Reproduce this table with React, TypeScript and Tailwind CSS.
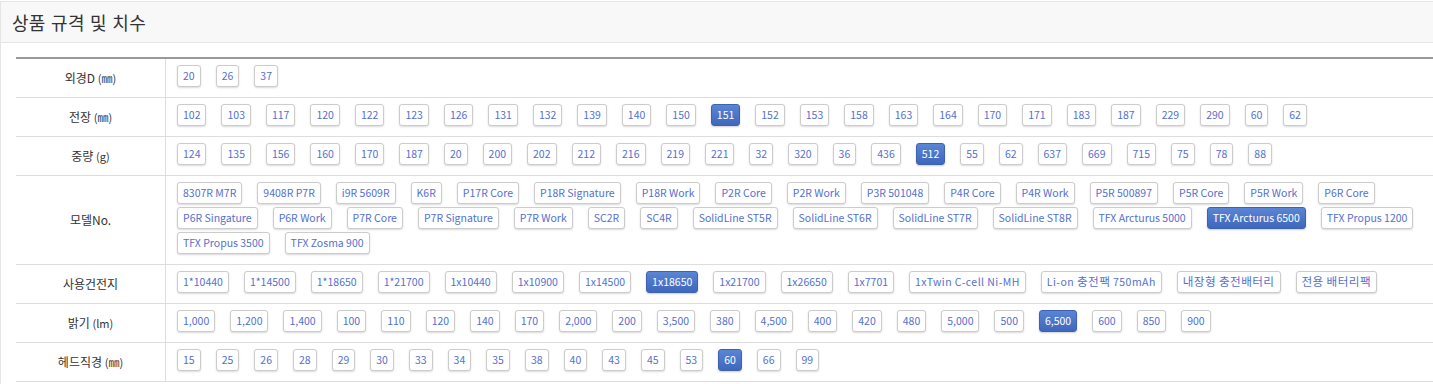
import React from "react";

type Row = { label: React.ReactNode; lines: string[][]; sel: string };

const FONT = { fontFamily: '"Noto Sans CJK KR", "Noto Sans", sans-serif' };

const WIDE = new Set(["1xTwin C-cell Ni-MH", "Li-on 충전팩 750mAh", "내장형 충전배터리", "전용 배터리팩"]);

const rows: Row[] = [
  {
    label: (
      <>
        외경D <span className="text-[11px]">(㎜)</span>
      </>
    ),
    lines: [["20", "26", "37"]],
    sel: "",
  },
  {
    label: (
      <>
        전장 <span className="text-[11px]">(㎜)</span>
      </>
    ),
    lines: [
      "102 103 117 120 122 123 126 131 132 139 140 150 151 152 153 158 163 164 170 171 183 187 229 290 60 62".split(" "),
    ],
    sel: "151",
  },
  {
    label: (
      <>
        중량 <span className="text-[11px]">(g)</span>
      </>
    ),
    lines: [
      "124 135 156 160 170 187 20 200 202 212 216 219 221 32 320 36 436 512 55 62 637 669 715 75 78 88".split(" "),
    ],
    sel: "512",
  },
  {
    label: <>모델No.</>,
    lines: [
      [
        "8307R M7R",
        "9408R P7R",
        "i9R 5609R",
        "K6R",
        "P17R Core",
        "P18R Signature",
        "P18R Work",
        "P2R Core",
        "P2R Work",
        "P3R 501048",
        "P4R Core",
        "P4R Work",
        "P5R 500897",
        "P5R Core",
        "P5R Work",
        "P6R Core",
      ],
      [
        "P6R Singature",
        "P6R Work",
        "P7R Core",
        "P7R Signature",
        "P7R Work",
        "SC2R",
        "SC4R",
        "SolidLine ST5R",
        "SolidLine ST6R",
        "SolidLine ST7R",
        "SolidLine ST8R",
        "TFX Arcturus 5000",
        "TFX Arcturus 6500",
        "TFX Propus 1200",
      ],
      ["TFX Propus 3500", "TFX Zosma 900"],
    ],
    sel: "TFX Arcturus 6500",
  },
  {
    label: <>사용건전지</>,
    lines: [
      [
        "1*10440",
        "1*14500",
        "1*18650",
        "1*21700",
        "1x10440",
        "1x10900",
        "1x14500",
        "1x18650",
        "1x21700",
        "1x26650",
        "1x7701",
        "1xTwin C-cell Ni-MH",
        "Li-on 충전팩 750mAh",
        "내장형 충전배터리",
        "전용 배터리팩",
      ],
    ],
    sel: "1x18650",
  },
  {
    label: (
      <>
        밝기 <span className="text-[11px]">(lm)</span>
      </>
    ),
    lines: [
      "1,000 1,200 1,400 100 110 120 140 170 2,000 200 3,500 380 4,500 400 420 480 5,000 500 6,500 600 850 900".split(" "),
    ],
    sel: "6,500",
  },
  {
    label: (
      <>
        헤드직경 <span className="text-[11px]">(㎜)</span>
      </>
    ),
    lines: ["15 25 26 28 29 30 33 34 35 38 40 43 45 53 60 66 99".split(" ")],
    sel: "60",
  },
];

function ChipText({ text }: { text: string }) {
  const parts = text.split(/([\uAC00-\uD7A3]+)/).filter((p) => p.length > 0);
  return (
    <>
      {parts.map((p, i) =>
        /[\uAC00-\uD7A3]/.test(p) ? (
          <span key={i} className="text-[11.6px]">
            {p}
          </span>
        ) : (
          <span key={i} className="whitespace-pre">
            {p.replace(/ /g, "\u00a0")}
          </span>
        )
      )}
    </>
  );
}

function Chip({ text, active }: { text: string; active: boolean }) {
  const wide = WIDE.has(text);
  if (active) {
    return (
      <span className="inline-flex h-[22px] items-center whitespace-nowrap rounded-[3px] border border-[#3d62b0] bg-gradient-to-b from-[#5a84d4] to-[#3f68bd] px-[5px] text-[10.5px] text-white shadow-[0_1px_2px_rgba(0,0,0,0.2)]">
        <ChipText text={text} />
      </span>
    );
  }
  return wide ? (
    <span className="inline-flex h-[22px] items-center whitespace-nowrap rounded-[3px] border border-[#cccccc] bg-white px-[5px] text-[10.5px] tracking-[0.45px] text-[#5470d0] shadow-[0_1px_2px_rgba(0,0,0,0.15)]">
      <ChipText text={text} />
    </span>
  ) : (
    <span className="inline-flex h-[22px] items-center whitespace-nowrap rounded-[3px] border border-[#cccccc] bg-white px-[5px] text-[10.5px] text-[#5470d0] shadow-[0_1px_2px_rgba(0,0,0,0.15)]">
      <ChipText text={text} />
    </span>
  );
}

export default function App() {
  return (
    <div className="w-[1433px] h-[384px] overflow-hidden bg-white" style={FONT}>
      <div className="mt-[1px] border-l border-t border-[#e5e5e5] h-[383px]">
        <div className="flex h-[41px] items-center border-b border-[#e5e5e5] bg-[#f8f8f8] pl-[11px] text-[18px] tracking-[0.3px] [word-spacing:1px] text-[#333]">
          상품 규격 및 치수
        </div>
        <div className="ml-[15px] mt-[14px] border-t-2 border-[#999999]">
          {rows.map((r, i) => (
            <div key={i} className="flex border-b border-[#dddddd]">
              <div className="flex w-[150px] shrink-0 items-center justify-center border-r border-[#dddddd] text-[12px] text-[#333]">
                <span>{r.label}</span>
              </div>
              <div className="flex flex-col gap-[3px] pl-[11px] pt-[6px] pb-[10px]">
                {r.lines.map((line, j) => (
                  <div key={j} className="flex flex-nowrap gap-x-[15px]">
                    {line.map((t) => (
                      <Chip key={t} text={t} active={t === r.sel} />
                    ))}
                  </div>
                ))}
              </div>
            </div>
          ))}
        </div>
      </div>
    </div>
  );
}
